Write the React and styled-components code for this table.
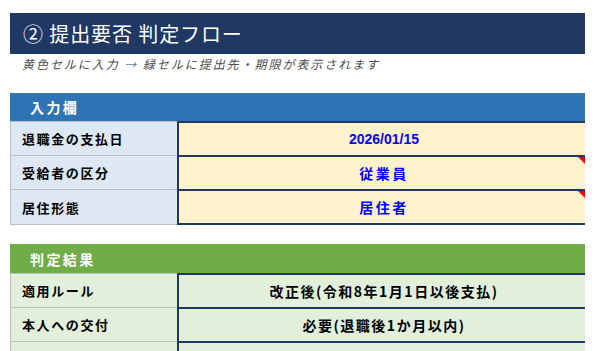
import React from "react";
import styled, { createGlobalStyle } from "styled-components";

const Global = createGlobalStyle`
  html, body { margin: 0; padding: 0; background: #ffffff; }
  body { font-family: "Noto Sans CJK JP", "Liberation Sans", sans-serif; }
`;

const Sheet = styled.div`
  width: 575px;
  margin-left: 10px;
  padding-top: 13px;
  overflow: hidden;
`;

const TitleBar = styled.h1`
  margin: 0;
  height: 41px;
  background: #203864;
  color: #ffffff;
  font-size: 20px;
  font-weight: 400;
  letter-spacing: 0.9px;
  display: flex;
  align-items: center;
  padding-left: 13px;
`;

const Subtitle = styled.p`
  margin: 0;
  height: 39px;
  padding: 1px 0 0 12px;
  box-sizing: border-box;
  color: #4d4d4d;
  font-size: 12px;
  font-style: italic;
  letter-spacing: 1.95px;
  line-height: 18px;
`;

const Arrow = styled.span`
  color: #5a7f9c;
`;

const Section = styled.section`
  margin-bottom: ${(p) => p.$gap || 0}px;
`;

const SectionHeader = styled.div`
  height: ${(p) => p.$h}px;
  background: ${(p) => p.$bg};
  color: #ffffff;
  font-size: 14px;
  font-weight: 700;
  letter-spacing: 2.4px;
  display: flex;
  align-items: center;
  padding-left: 20px;
`;

const Row = styled.div`
  display: grid;
  grid-template-columns: 167px 1fr;
  height: ${(p) => (p.$last ? 36 : 34)}px;
`;

const Label = styled.div`
  background: ${(p) => p.$bg};
  border-left: 1px solid #bfbfbf;
  border-top: 1px solid #bfbfbf;
  border-bottom: ${(p) => (p.$last ? "1px solid #bfbfbf" : "none")};
  color: #000000;
  font-size: 13px;
  font-weight: 700;
  letter-spacing: 1.6px;
  display: flex;
  align-items: center;
  padding-left: 11px;
`;

const Value = styled.div`
  position: relative;
  background: ${(p) => p.$bg};
  border-left: 2px solid #1f3864;
  border-top: 2px solid #1f3864;
  border-bottom: ${(p) => (p.$last ? "2px solid #1f3864" : "none")};
  color: ${(p) => p.$color};
  font-size: 14px;
  font-weight: 700;
  letter-spacing: ${(p) => p.$ls || 0}px;
  display: flex;
  align-items: center;
  justify-content: center;
  padding-left: 4px;
`;

const Num = styled.span`
  font-family: "Liberation Sans", Arial, sans-serif;
  letter-spacing: 0;
`;

const Comment = styled.span`
  position: absolute;
  top: 0;
  right: 0;
  width: 0;
  height: 0;
  border-top: 7px solid #ff0000;
  border-left: 7px solid transparent;
`;

const inputRows = [
  { label: "退職金の支払日", value: <Num>2026/01/15</Num>, ls: 0 },
  { label: "受給者の区分", value: "従業員", ls: 2.5, comment: true },
  { label: "居住形態", value: "居住者", ls: 2.5, comment: true },
];

const resultRows = [
  { label: "適用ルール", value: "改正後(令和8年1月1日以後支払)" },
  { label: "本人への交付", value: "必要(退職後1か月以内)" },
  { label: "", value: "" },
];

export default function App() {
  return (
    <>
      <Global />
      <Sheet>
        <TitleBar>② 提出要否 判定フロー</TitleBar>
        <Subtitle>
          黄色セルに入力 <Arrow>→</Arrow> 緑セルに提出先・期限が表示されます
        </Subtitle>
        <Section $gap={19}>
          <SectionHeader $bg="#2e75b6" $h={28}>入力欄</SectionHeader>
          {inputRows.map((r, i) => {
            const last = i === inputRows.length - 1;
            return (
              <Row key={i} $last={last}>
                <Label $bg="#dde8f4" $last={last}>{r.label}</Label>
                <Value $bg="#fff2cc" $color="#0000ff" $ls={r.ls} $last={last}>
                  {r.value}
                  {r.comment && <Comment />}
                </Value>
              </Row>
            );
          })}
        </Section>
        <Section>
          <SectionHeader $bg="#70ad47" $h={29}>判定結果</SectionHeader>
          {resultRows.map((r, i) => (
            <Row key={i}>
              <Label $bg="#e2efda">{r.label}</Label>
              <Value $bg="#e2efda" $color="#000000" $ls={1.5}>{r.value}</Value>
            </Row>
          ))}
        </Section>
      </Sheet>
    </>
  );
}
